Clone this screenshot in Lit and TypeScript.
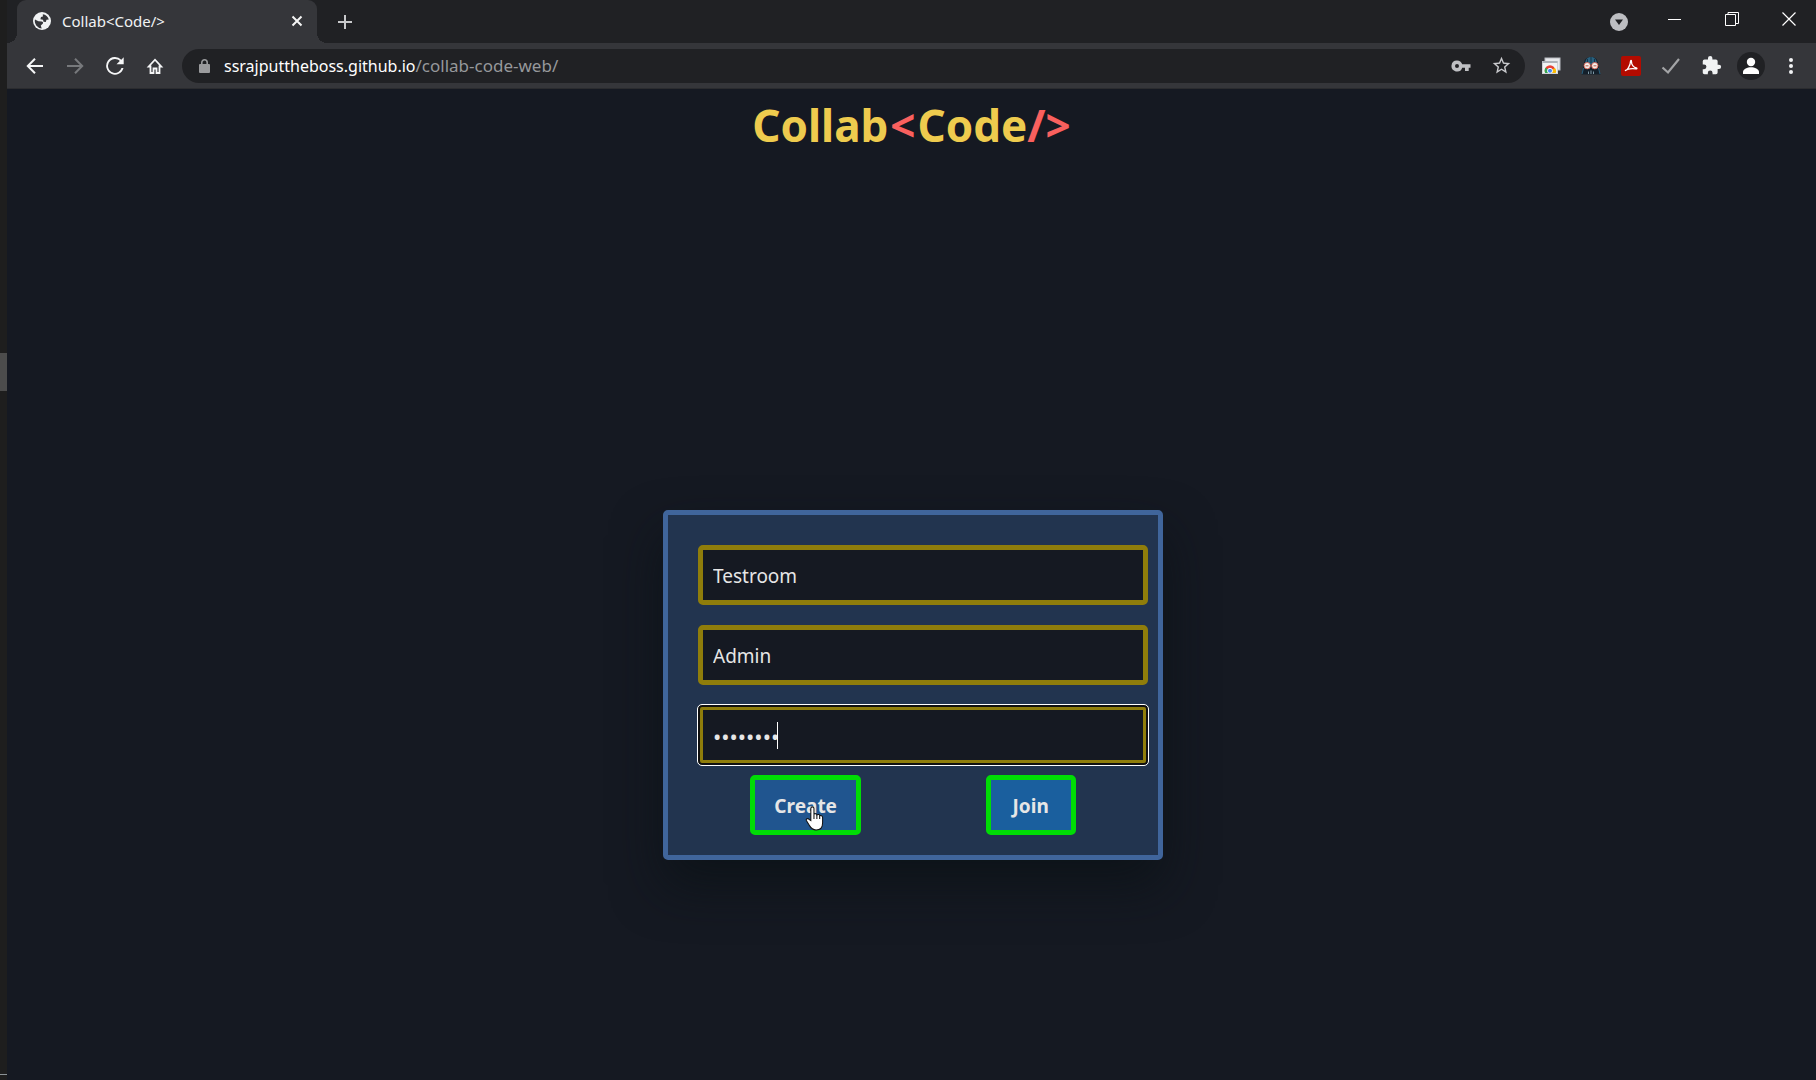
import { LitElement, html, css, svg } from "lit";
import { customElement, state } from "lit/decorators.js";

const icon = (size: number, viewBox: string, body: unknown) => html`<svg
  class="icon" width=${size} height=${size} viewBox=${viewBox} aria-hidden="true">${body}</svg>`;

const globe = icon(18, "0 0 18 18", svg`
  <circle cx="9" cy="9" r="9" fill="#f1f3f4"/>
  <path fill="#35363a" d="M2 7.500l3.500 1.700 3.300.3c1.400.3 1.700 1.600.6 2.600l-1.600 1.300.9 3A7.200 7.200 0 0 1 2 7.500z"/>
  <path fill="#35363a" d="M9.800 2.200c3 .4 5.200 2.300 6 5.300l-2.300.3-.7 2.200-2.300-.2-.5-2-2.600-.5.6-2.200 1.900-.5z"/>`);
const closeTab = icon(14, "0 0 14 14", svg`<path d="M2.500 2.500l9 9M11.500 2.500l-9 9" stroke="#f5f5f5" stroke-width="2"/>`);
const plus = icon(16, "0 0 16 16", svg`<path d="M8 1v14M1 8h14" stroke="#c8c9cb" stroke-width="2"/>`);
const back = icon(20, "0 0 20 20", svg`<path d="M18 10H3M10 2.800L2.800 10l7.200 7.200" fill="none" stroke="#f5f6f7" stroke-width="2"/>`);
const forward = icon(20, "0 0 20 20", svg`<path d="M2 10h15M10 2.800l7.200 7.200-7.200 7.200" fill="none" stroke="#77797c" stroke-width="2"/>`);
const reload = icon(24, "0 0 24 24", svg`<path fill="#f5f6f7" d="M18.300 5.700A8.800 8.800 0 1 0 20.500 14h-2A6.900 6.900 0 1 1 12 5.100c1.900 0 3.500.7 4.800 1.900L13.500 10.300H20.700V3.300z"/>`);
const home = icon(18, "0 0 18 18", svg`<path d="M4.500 16v-6.500H2.700L9 2.700l6.300 6.800h-1.800V16h-3v-4.500h-3V16z" fill="none" stroke="#f5f6f7" stroke-width="1.800"/>`);
const lock = icon(16, "0 0 16 16", svg`<rect x="3" y="6" width="11" height="9" rx="1" fill="#9a9b9d"/><path d="M5.800 6.500V4.500a2.700 2.700 0 0 1 5.400 0v2" fill="none" stroke="#9a9b9d" stroke-width="1.600"/>`);
const key = icon(20, "0 0 20 20", svg`<path fill="#bfc0c3" fill-rule="evenodd" d="M6 4.500a5.500 5.500 0 1 0 5.200 7.200H14V15h3.700v-3.300H19.500V8.300h-8.300A5.500 5.500 0 0 0 6 4.500zm0 3.500a2 2 0 1 1 0 4 2 2 0 0 1 0-4z"/>`);
const star = icon(21, "0 0 24 24", svg`<path fill="#c9cacd" d="M22 9.240l-7.190-.62L12 2 9.190 8.630 2 9.240l5.460 4.730L5.820 21 12 17.270 18.180 21l-1.630-7.030zM12 15.400l-3.760 2.270 1-4.280-3.320-2.880 4.380-.38L12 6.100l1.710 4.040 4.380.38-3.320 2.880 1 4.280z"/>`);
const cast = icon(20, "0 0 20 20", svg`
  <rect x="4" y="2" width="15" height="12" fill="#e8eaed" stroke="#b9bcc1" stroke-width="1"/>
  <rect x="1.500" y="5.500" width="15" height="12" fill="#f1f3f4" stroke="#cfd2d6" stroke-width="1"/>
  <rect x="1.500" y="5" width="15" height="2" fill="#aeb3b9"/>
  <clipPath id="page"><rect x="1" y="7" width="16" height="10"/></clipPath>
  <g clip-path="url(#page)"><circle cx="9" cy="14.500" r="5.300" fill="#ea4335"/>
  <path d="M9 14.500L4.500 11.800A5.300 5.300 0 0 0 6 19z" fill="#34a853"/><path d="M9 14.500l5-2.500a5.300 5.300 0 0 1-1 7z" fill="#fbbc04"/>
  <circle cx="9" cy="14.800" r="2.500" fill="#4285f4" stroke="#fff"/></g>`);
const vader = icon(20, "0 0 20 20", svg`
  <path d="M3 8C3 3 6 1 10 1s7 2 7 7l2.500 10.500H.5z" fill="#14202b"/>
  <path d="M4 8C4.300 3.500 6.500 1 10 1s5.700 2.500 6 7z" fill="#28617f"/>
  <path d="M10 1v6M6.500 3v3M13.500 3v3" stroke="#143447"/>
  <path d="M2.500 12L1 18M17.500 12l1.500 6" stroke="#28617f"/>
  <path d="M7.500 15.500v2.500M10 14.500V18M12.500 15.500v2.500" stroke="#7d97a5"/>
  <g fill="#f3eeea" stroke="#d9503f" stroke-width=".8"><circle cx="6.200" cy="9.700" r="3.200"/><circle cx="13.800" cy="9.700" r="3.200"/></g>
  <path d="M4.500 9.700h3M12.500 9.700h3" stroke="#c98a80" stroke-width="1.500"/>`);
const acrobat = icon(20, "0 0 20 20", svg`
  <rect width="20" height="20" rx="2" fill="#b30b00"/>
  <path d="M4.500 14.500c1.500 0 4.800-4.500 5-9 0-1.400 1.100-1.400 1 .2-.2 3.300 2.400 5.900 4.800 6.200 1.100.3.600 1.200-.5 1-2.700-.5-5.800-.3-8.300.5-1.500.6-2.500 1.500-2 1.100z" fill="none" stroke="#fff" stroke-width="1.300" stroke-linejoin="round"/>`);
const check = icon(20, "0 0 20 20", svg`<path d="M1.500 11.500l5.500 5L18 3" fill="none" stroke="#a3a4a6" stroke-width="2.200"/>`);
const puzzle = icon(21, "0 0 24 24", svg`<path fill="#f1f3f4" d="M20.500 11H19V7a2 2 0 0 0-2-2h-4V3.500a2.500 2.500 0 0 0-5 0V5H4a2 2 0 0 0-2 2v3.800h1.500a2.700 2.700 0 0 1 0 5.400H2V20c0 1.100.9 2 2 2h3.800v-1.500a2.700 2.700 0 0 1 5.400 0V22H17a2 2 0 0 0 2-2v-4h1.500a2.500 2.500 0 0 0 0-5z"/>`);
const person = icon(28, "0 0 28 28", svg`<circle cx="14" cy="14" r="14" fill="#202124"/>
  <circle cx="14" cy="10" r="4.200" fill="#fff"/><path d="M6 22v-2c0-3 4.500-4.700 8-4.700s8 1.700 8 4.700v2z" fill="#fff"/>`);
const dots = icon(20, "0 0 20 20", svg`<g fill="#f1f3f4"><circle cx="10" cy="4" r="2"/><circle cx="10" cy="10" r="2"/><circle cx="10" cy="16" r="2"/></g>`);
const tabSearch = icon(18, "0 0 18 18", svg`<circle cx="9" cy="9" r="9" fill="#bdbec2"/><path d="M5 6.500h8L9 12z" fill="#202124"/>`);
const minimise = icon(14, "0 0 14 14", svg`<path d="M0 7.500h13" stroke="#fff"/>`);
const restore = icon(14, "0 0 14 14", svg`<path d="M.5 2.500h10v11H.5zM3 2V.5h10.500v11H11" fill="none" stroke="#fff"/>`);
const closeWindow = icon(14, "0 0 14 14", svg`<path d="M.5.5l13 13M13.500.5l-13 13" stroke="#fff" stroke-width="1.200"/>`);

@customElement("browser-bar")
export class BrowserBar extends LitElement {
  static styles = css`
    :host {
      display: block;
      font-family: "Noto Sans", "Open Sans", sans-serif;
    }
    .icon { display: block; flex: none; }
    button {
      display: grid;
      place-items: center;
      flex: none;
      margin: 0;
      padding: 0;
      border: 0;
      background: none;
    }
    .strip {
      display: flex;
      align-items: center;
      height: 43px;
      padding-left: 10px;
      background: #202124;
    }
    .tab {
      position: relative;
      display: flex;
      align-items: center;
      width: 300px;
      height: 43px;
      padding: 0 13px 2px 16px;
      box-sizing: border-box;
      gap: 11px;
      border-radius: 9px 9px 0 0;
      background: #35363a;
      color: #f1f3f4;
    }
    .tab::before, .tab::after {
      content: "";
      position: absolute;
      bottom: 0;
      width: 10px;
      height: 10px;
    }
    .tab::before { right: 100%; background: radial-gradient(circle at 0 0, transparent 10px, #35363a 10px); }
    .tab::after { left: 100%; background: radial-gradient(circle at 100% 0, transparent 10px, #35363a 10px); }
    .name { flex: 1; font-size: 15px; line-height: 20px; }
    .new { width: 40px; height: 40px; margin-left: 8px; }
    .controls { display: flex; align-items: flex-start; gap: 3px; margin-left: auto; }
    .controls button { width: 54px; height: 38px; }
    .controls .search { width: 40px; height: 43px; margin-right: 6px; }
    .toolbar {
      display: flex;
      align-items: center;
      height: 45px;
      padding: 0 5px 0 8px;
      border-bottom: 1px solid #2b2c2f;
      background: #35363a;
    }
    .toolbar button { width: 40px; height: 40px; }
    .address {
      display: flex;
      align-items: center;
      flex: 1;
      height: 34px;
      margin: 0 6px 0 7px;
      padding: 0 4px 0 14px;
      border-radius: 17px;
      background: #202124;
    }
    .url {
      flex: 1;
      margin-left: 12px;
      color: #96989b;
      font-size: 17px;
      line-height: 24px;
      text-decoration: none;
    }
    .host { color: #fff; font-size: 16px; }
  `;

  render() {
    return html`
      <div class="strip">
        <div class="tab">${globe}<span class="name">Collab&lt;Code/&gt;</span>
          <button aria-label="Close tab">${closeTab}</button></div>
        <button class="new" aria-label="New tab">${plus}</button>
        <div class="controls">
          <button class="search" aria-label="Search tabs">${tabSearch}</button>
          <button aria-label="Minimise">${minimise}</button>
          <button aria-label="Restore">${restore}</button>
          <button aria-label="Close">${closeWindow}</button>
        </div>
      </div>
      <div class="toolbar">
        <button aria-label="Back">${back}</button>
        <button aria-label="Forward">${forward}</button>
        <button aria-label="Reload">${reload}</button>
        <button aria-label="Home">${home}</button>
        <div class="address">
          ${lock}
          <a class="url" href="#"><span class="host">ssrajputtheboss.github.io</span>/collab-code-web/</a>
          <button aria-label="Saved passwords">${key}</button>
          <button aria-label="Bookmark">${star}</button>
        </div>
        <button aria-label="Remote desktop">${cast}</button>
        <button aria-label="Dark theme extension">${vader}</button>
        <button aria-label="PDF tools">${acrobat}</button>
        <button aria-label="Checker">${check}</button>
        <button aria-label="Extensions">${puzzle}</button>
        <button aria-label="Profile">${person}</button>
        <button aria-label="Menu">${dots}</button>
      </div>`;
  }
}

@customElement("room-form")
export class RoomForm extends LitElement {
  @state() private room = "Testroom";
  @state() private user = "Admin";
  @state() private password = "password";

  static styles = css`
    :host { display: block; font-family: "Noto Sans", "Open Sans", sans-serif; }
    .panel {
      width: 500px;
      box-sizing: border-box;
      padding: 30px 0 20px;
      border: 5px solid #40659b;
      border-radius: 5px;
      background: #22344f;
      box-shadow: 0 25px 50px rgba(10, 17, 22, 0.7);
    }
    .fields {
      display: grid;
      gap: 20px;
      padding: 0 10px 0 30px;
    }
    .field { position: relative; display: grid; }
    .hidden {
      position: absolute;
      inset: 0;
      opacity: 0;
      pointer-events: none;
    }
    input {
      width: 100%;
      height: 60px;
      box-sizing: border-box;
      padding: 2px 10px 0;
      border: 5px solid #8f7d0b;
      border-radius: 5px;
      outline: none;
      background: #151922;
      color: #e6e6e6;
      font: 19px/28px "Noto Sans", "Open Sans", sans-serif;
    }
    input[type="password"] { font-size: 22px; }
    .active::before {
      content: "";
      position: absolute;
      inset: -1px;
      border: 1px solid #fff;
      border-radius: 5px;
      box-shadow: inset 0 0 0 2px #101010;
      pointer-events: none;
    }
    .caret {
      position: absolute;
      left: 79px;
      top: 17px;
      width: 1px;
      height: 27px;
      background: #fff;
    }
    .actions {
      display: flex;
      justify-content: space-around;
      margin-top: 10px;
      padding: 0 20px;
    }
    .action {
      position: relative;
      min-width: 90px;
      height: 60px;
      padding: 2px 19px 0;
      border: 5px solid #00dc05;
      border-radius: 5px;
      background: #1a5f9e;
      color: #e6e6e6;
      font: bold 19px/28px "Noto Sans", "Open Sans", sans-serif;
      cursor: pointer;
    }
    .hovered { background: #20558f; }
    .pointer { position: absolute; left: 50px; top: 26px; }
  `;

  render() {
    return html`
      <form class="panel" @submit=${(e: Event) => e.preventDefault()}>
        <div class="fields">
          <div class="field"><label class="hidden" for="room">Room</label>
            <input id="room" .value=${this.room} @input=${(e: any) => (this.room = e.target.value)}></div>
          <div class="field"><label class="hidden" for="user">Name</label>
            <input id="user" .value=${this.user} @input=${(e: any) => (this.user = e.target.value)}></div>
          <div class="field active"><label class="hidden" for="password">Password</label>
            <input id="password" type="password" .value=${this.password} @input=${(e: any) => (this.password = e.target.value)}>
            <span class="caret"></span></div>
        </div>
        <div class="actions">
          <button class="action hovered">Create
            <svg class="pointer" width="20" height="25" viewBox="0 0 19 24" aria-hidden="true">
              <path d="M5.500 14V2.500c0-2.200 3-2.200 3 0V8c.5-1 2.700-.8 2.900.5.700-.8 2.500-.4 2.700.8 1-.6 2.700 0 2.700 1.700v5c0 4-2 7-6.300 7-4 0-5-2-6.500-4.500L1.200 14c-.7-1.600 1.300-2.500 2.500-1.300z" fill="#fff" stroke="#111" stroke-width="1"/>
              <path d="M8.500 8v4.500M11.300 8.500v4M14 9.500v3" stroke="#111" stroke-width="1"/>
            </svg></button>
          <button class="action">Join</button>
        </div>
      </form>`;
  }
}

@customElement("app-root")
export class AppRoot extends LitElement {
  static styles = css`
    :host { display: block; font-family: "Noto Sans", "Open Sans", sans-serif; }
    .desktop {
      display: grid;
      grid-template-columns: 7px 1fr;
      min-height: 100vh;
      background: #151922;
    }
    .behind {
      display: flex;
      flex-direction: column;
      padding: 353px 0 5px;
      background: #1e1e1e;
    }
    .thumb { height: 38px; background: #4c4c4c; }
    .line { height: 1px; margin-top: auto; background: #8b9296; }
    .window { display: flex; flex-direction: column; min-width: 0; }
    .title {
      height: 100px;
      margin: 0;
      padding-top: 4px;
      box-sizing: border-box;
      color: #eecb4e;
      font-size: 44px;
      font-weight: bold;
      line-height: 64px;
      text-align: center;
    }
    .mark { color: #f9605e; }
    .open { margin: 0 2px; }
    .room {
      display: flex;
      flex: 1;
      align-items: center;
      justify-content: center;
      padding: 101px 0 0 3px;
    }
  `;

  render() {
    return html`
      <div class="desktop">
        <div class="behind"><div class="thumb"></div><div class="line"></div></div>
        <div class="window">
          <browser-bar></browser-bar>
          <h1 class="title">Collab<span class="mark open">&lt;</span>Code<span class="mark">/&gt;</span></h1>
          <main class="room"><room-form></room-form></main>
        </div>
      </div>`;
  }
}
